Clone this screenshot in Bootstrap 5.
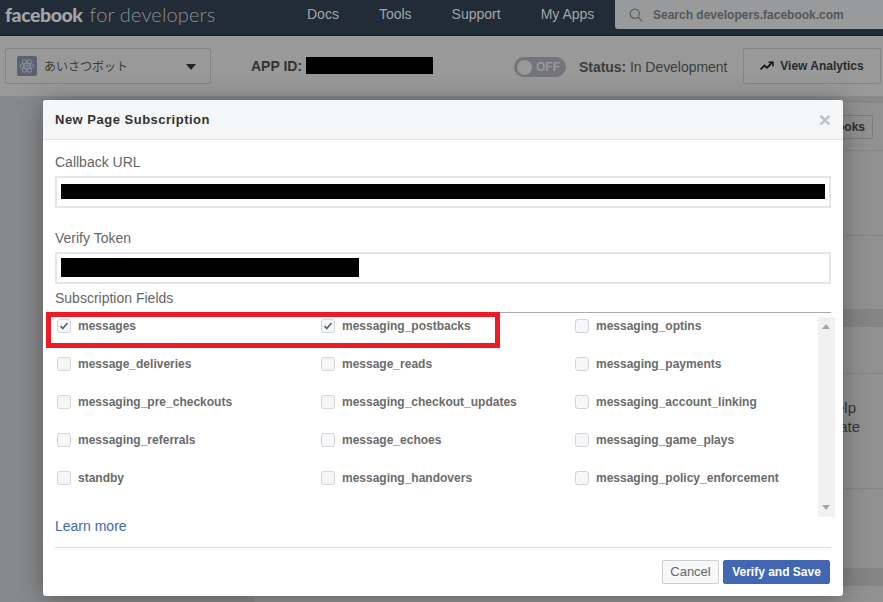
<!DOCTYPE html>
<html lang="en">
<head>
    <meta charset="UTF-8">
    <meta name="viewport" content="width=device-width, initial-scale=1.0">
    <title>New Page Subscription</title>
    <link href="https://cdn.jsdelivr.net/npm/bootstrap@5.3.0/dist/css/bootstrap.min.css" rel="stylesheet">
    <style>
        html, body { height: 100%; }
        body {
            font-family: "Liberation Sans", "Noto Sans CJK JP", sans-serif;
            background: #88898b;
            overflow: hidden;
            position: relative;
        }
        /* top bar */
        .top-bar { height: 36px; background: #212c36; border-bottom: 1px solid #14191f; }
        .fb-logo { font-family: Lato, "Liberation Sans", sans-serif; font-size: 20px; line-height: 28px; color: #8d9094; width: 307px; padding-left: 5px; white-space: nowrap; }
        .fb-logo b { font-weight: 900; font-size: 19.5px; letter-spacing: -.45px; color: #a3a5a8; margin-right: 2px; }
        .fb-logo span { font-weight: 300; letter-spacing: .15px; }
        .top-link { color: #a2a5a8; font-size: 14px; line-height: 28px; text-decoration: none; }
        .top-links { width: 308px; gap: 40px; }
        .search-box { flex: 1; height: 29px; background: #999a9b; border-radius: 0 0 0 3px; padding-left: 14px; gap: 10px; color: #565759; font-size: 12px; font-weight: 700; }
        /* app bar */
        .app-bar { height: 61px; background: #999; border-bottom: 1px solid #8c8c8c; padding: 12px 2px 0 5px; }
        .app-picker { width: 206px; height: 36px; border: 1px solid #858585; border-radius: 2px; padding: 1px 11px 0; color: #3c3c3c; font-size: 12px; gap: 7px; }
        .app-icon { width: 20px; height: 20px; margin-top: -1px; border-radius: 2px; background: #5c6170; }
        .app-caret { width: 0; height: 0; border: 5px solid transparent; border-top: 6px solid #222; border-bottom: 0; margin-left: auto; margin-right: 3px; }
        .app-id { margin-left: 40px; width: 263px; height: 36px; font-size: 14px; font-weight: 700; color: #333; gap: 4px; }
        .id-block { width: 127px; height: 17px; margin-top: -2px; }
        .black-out { background: #000; display: block; }
        .toggle-pill { flex: none; width: 52px; height: 20px; margin-top: 9px; border-radius: 10px; background: #74757b; padding: 2px 3px; color: #999; font-size: 12px; font-weight: 700; gap: 4px; }
        .toggle-knob { width: 15px; height: 15px; border-radius: 50%; background: #999; }
        .status-line { font-size: 14px; color: #3d3d3d; margin: 9px 0 0 13px; width: 164px; white-space: nowrap; letter-spacing: -.05px; }
        .analytics-btn { width: 138px; height: 36px; border: 1px solid #858585; border-radius: 2px; font-size: 12px; font-weight: 700; color: #2a2a2a; gap: 6px; }
        /* page behind the dialog */
        .page-area { height: 505px; }
        .side-area { width: 254px; }
        .main-area { flex: 1; background: #919191; margin-top: 6px; }
        .main-row { border-bottom: 1px solid #868686; }
        .main-band { background: #858585; height: 18px; }
        .row-a { height: 48px; }
        .row-b { height: 85px; }
        .row-c { height: 73px; }
        .row-d { height: 47px; }
        .row-e { height: 115px; }
        .row-f { height: 79px; }
        .hooks-btn { border: 1px solid #7c7c7c; border-radius: 2px; width: 60px; height: 24px; font-size: 12px; font-weight: 700; color: #2e2e2e; margin: 12px 10px 0 auto; line-height: 22px; padding-right: 7px; text-align: right; }
        .help-text { font-size: 15px; line-height: 19px; color: #333; padding: 24px 23px 0 0; text-align: right; }
        .help-text span { margin-right: 4px; }
        /* dialog */
        .sub-dialog { position: absolute; left: 43px; top: 100px; width: 800px; height: 496px; background: #fff; border: 0; border-radius: 3px; box-shadow: 0 2px 26px rgba(0,0,0,.35); }
        .sub-dialog .modal-header { height: 40px; padding: 0 12px; background: #f5f6f7; border-bottom: 1px solid #e5e5e5; border-radius: 3px 3px 0 0; }
        .sub-title { font-size: 13px; font-weight: 700; color: #333; letter-spacing: .5px; margin: 0; }
        .sub-close { font-size: 21px; line-height: 1; font-weight: 700; color: #bec1c5; }
        .sub-body { padding: 12px 12px 0; }
        .sub-label { font-size: 14px; line-height: 20px; color: #666; margin-bottom: 4px; display: block; }
        .sub-input { height: 32px; border: 2px solid #e3e5e9; border-radius: 0; padding: 0 4px; margin-bottom: 20px; position: relative; }
        .sub-input .black-out { position: absolute; left: 4px; }
        .url-block { width: 764px; height: 15px; top: 6px; }
        .token-block { width: 298px; height: 19px; top: 4px; }
        .fields-title { font-size: 14px; line-height: 20px; color: #666; border-bottom: 1px solid #aaa; height: 25px; margin-top: -16px; }
        .fields-wrap { height: 204px; margin-right: -4px; padding-top: 3px; position: relative; }
        .fields-grid { display: grid; grid-template-columns: 264px 254px 1fr; grid-auto-rows: 38px; padding-left: 2px; }
        .field-item { display: flex; align-items: flex-start; gap: 7px; font-size: 12px; line-height: 16px; font-weight: 700; color: #6b6b6b; padding-top: 2px; margin: 0; }
        .field-check { appearance: none; width: 14px; height: 14px; margin: 1px 0 0; background: #f6f7f9; border: 1px solid #d3d5d9; border-radius: 3px; flex: none; }
        .field-check:checked { background: #f6f7f9 url("data:image/svg+xml,%3Csvg xmlns='http://www.w3.org/2000/svg' viewBox='0 0 14 14'%3E%3Cpath d='M3 7.2 5.6 10 11 3.4' fill='none' stroke='%235c6170' stroke-width='1.9'/%3E%3C/svg%3E") center no-repeat; }
        .fake-scroll { position: absolute; right: 0; top: 4px; bottom: 0; width: 17px; background: #f1f1f1; }
        .fake-scroll i { position: absolute; left: 4px; width: 0; height: 0; border: 4px solid transparent; }
        .fake-scroll .arrow-up { top: 7px; border-top: 0; border-bottom: 5px solid #a6a6a6; }
        .fake-scroll .arrow-down { bottom: 7px; border-bottom: 0; border-top: 5px solid #a6a6a6; }
        .learn-link { font-size: 14px; line-height: 18px; color: #4267b2; text-decoration: none; display: block; }
        .sub-rule { border-top: 1px solid #dddfe2; margin-top: 12px; }
        .sub-foot { gap: 4px; padding: 12px 1px 0 0; }
        .btn-cancel, .btn-verify { height: 24px; padding: 0; line-height: 22px; border-radius: 2px; }
        .btn-cancel { width: 57px; background: #f6f7f9; border: 1px solid #ced0d4; color: #666; font-size: 13px; }
        .btn-verify { width: 107px; background: #4267b2; border: 1px solid #4267b2; color: #fff; font-size: 12px; font-weight: 700; }
        /* red annotation on the screenshot */
        .red-mark { position: absolute; left: 46px; top: 312px; width: 454px; height: 36px; border: 5px solid #ed1c24; pointer-events: none; }
    </style>
</head>
<body>
    <!-- top bar -->
    <div class="top-bar d-flex">
        <div class="fb-logo"><b>facebook</b> <span>for developers</span></div>
        <div class="top-links d-flex">
            <a class="top-link" href="#">Docs</a>
            <a class="top-link" href="#">Tools</a>
            <a class="top-link" href="#">Support</a>
            <a class="top-link" href="#">My Apps</a>
        </div>
        <div class="search-box d-flex align-items-center">
            <svg width="14" height="14" viewBox="0 0 14 14" fill="none" stroke="#5f6062" stroke-width="1.3"><circle cx="5.8" cy="5.8" r="4.6"/><path d="M9.2 9.2 13.2 13.4"/></svg>
            <span>Search developers.facebook.com</span>
        </div>
    </div>

    <!-- app bar -->
    <div class="app-bar d-flex align-items-start">
        <div class="app-picker d-flex align-items-center">
            <span class="app-icon d-flex align-items-center justify-content-center">
                <svg width="16" height="16" viewBox="0 0 16 16" fill="none" stroke="#8f939e" stroke-width=".9"><ellipse cx="8" cy="8" rx="7" ry="2.8"/><ellipse cx="8" cy="8" rx="7" ry="2.8" transform="rotate(60 8 8)"/><ellipse cx="8" cy="8" rx="7" ry="2.8" transform="rotate(120 8 8)"/><circle cx="8" cy="8" r="1.2"/></svg>
            </span>
            <span>あいさつボット</span>
            <span class="app-caret"></span>
        </div>
        <div class="app-id d-flex align-items-center">
            <span>APP ID:</span>
            <span class="black-out id-block"></span>
        </div>
        <div class="toggle-pill d-flex align-items-center">
            <span class="toggle-knob"></span><span>OFF</span>
        </div>
        <div class="status-line"><b>Status:</b> In Development</div>
        <div class="analytics-btn d-flex align-items-center justify-content-center">
            <svg width="14" height="10" viewBox="0 0 14 10" fill="none" stroke="#111" stroke-width="1.7"><path d="M.5 8.5 4.5 4.5 7 6.8 12 1.6"/><path d="M8.6 1.2H13V5.4" stroke-width="1.4"/></svg>
            <span>View Analytics</span>
        </div>
    </div>

    <!-- page behind the dialog -->
    <div class="page-area d-flex">
        <div class="side-area"></div>
        <div class="main-area">
            <div class="main-row row-a d-flex"><div class="hooks-btn">ooks</div></div>
            <div class="main-row row-b"></div>
            <div class="row-c"></div>
            <div class="main-band"></div>
            <div class="main-row row-d"></div>
            <div class="main-row row-e help-text"><span>elp</span><br>ate</div>
            <div class="row-f"></div>
            <div class="main-band"></div>
        </div>
    </div>

    <!-- dialog -->
    <div class="modal-content sub-dialog">
        <div class="modal-header d-flex justify-content-between">
            <h5 class="sub-title">New Page Subscription</h5>
            <span class="sub-close">×</span>
        </div>
        <div class="sub-body">
            <label class="sub-label">Callback URL</label>
            <div class="form-control sub-input"><span class="black-out url-block"></span></div>
            <label class="sub-label">Verify Token</label>
            <div class="form-control sub-input"><span class="black-out token-block"></span></div>
            <div class="fields-title">Subscription Fields</div>
            <div class="fields-wrap">
                <div class="fields-grid">
                    <label class="field-item"><input class="field-check" type="checkbox" checked>messages</label>
                    <label class="field-item"><input class="field-check" type="checkbox" checked>messaging_postbacks</label>
                    <label class="field-item"><input class="field-check" type="checkbox">messaging_optins</label>
                    <label class="field-item"><input class="field-check" type="checkbox">message_deliveries</label>
                    <label class="field-item"><input class="field-check" type="checkbox">message_reads</label>
                    <label class="field-item"><input class="field-check" type="checkbox">messaging_payments</label>
                    <label class="field-item"><input class="field-check" type="checkbox">messaging_pre_checkouts</label>
                    <label class="field-item"><input class="field-check" type="checkbox">messaging_checkout_updates</label>
                    <label class="field-item"><input class="field-check" type="checkbox">messaging_account_linking</label>
                    <label class="field-item"><input class="field-check" type="checkbox">messaging_referrals</label>
                    <label class="field-item"><input class="field-check" type="checkbox">message_echoes</label>
                    <label class="field-item"><input class="field-check" type="checkbox">messaging_game_plays</label>
                    <label class="field-item"><input class="field-check" type="checkbox">standby</label>
                    <label class="field-item"><input class="field-check" type="checkbox">messaging_handovers</label>
                    <label class="field-item"><input class="field-check" type="checkbox">messaging_policy_enforcement</label>
                </div>
                <div class="fake-scroll"><i class="arrow-up"></i><i class="arrow-down"></i></div>
            </div>
            <a class="learn-link" href="#">Learn more</a>
            <div class="sub-rule"></div>
            <div class="sub-foot d-flex justify-content-end">
                <button type="button" class="btn btn-cancel">Cancel</button>
                <button type="button" class="btn btn-verify">Verify and Save</button>
            </div>
        </div>
    </div>

    <div class="red-mark"></div>

    <script src="https://cdn.jsdelivr.net/npm/bootstrap@5.3.0/dist/js/bootstrap.bundle.min.js"></script>
</body>
</html>
